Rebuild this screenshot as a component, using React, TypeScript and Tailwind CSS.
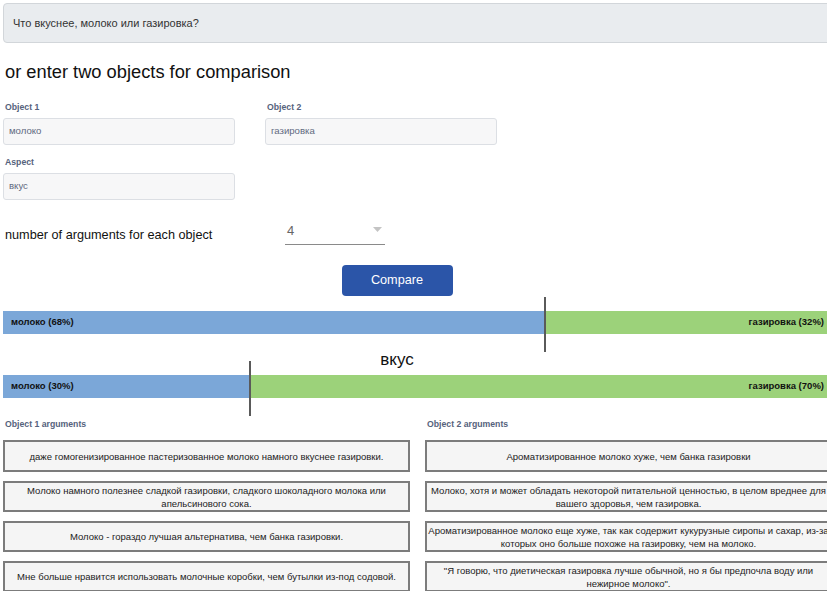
import React from "react";

interface Score {
  first: number;
  second: number;
  split: number; // where the divider sits, px from the bar's left edge
}

const objectA = "молоко";
const objectB = "газировка";

const argsA = [
  "даже гомогенизированное пастеризованное молоко намного вкуснее газировки.",
  "Молоко намного полезнее сладкой газировки, сладкого шоколадного молока или апельсинового сока.",
  "Молоко - гораздо лучшая альтернатива, чем банка газировки.",
  "Мне больше нравится использовать молочные коробки, чем бутылки из-под содовой.",
];

const argsB = [
  "Ароматизированное молоко хуже, чем банка газировки",
  "Молоко, хотя и может обладать некоторой питательной ценностью, в целом вреднее для вашего здоровья, чем газировка.",
  "Ароматизированное молоко еще хуже, так как содержит кукурузные сиропы и сахар, из-за которых оно больше похоже на газировку, чем на молоко.",
  "\"Я говорю, что диетическая газировка лучше обычной, но я бы предпочла воду или нежирное молоко\".",
];

const Field = ({ label, value }: { label: string; value: string }) => (
  <div className="flex flex-col">
    <span className="text-[8.7px] leading-[12px] font-bold text-[#55627c] mb-[5px] pl-[2px]">{label}</span>
    <div className="h-[27px] rounded-[3px] border-[1.5px] border-[#dcdfe4] bg-[#f7f7f8] flex items-center px-[5px] text-[9.6px] text-[#5f6a80]">
      {value}
    </div>
  </div>
);

const ScoreBar = ({ score }: { score: Score }) => (
  <div className="relative h-[23px] flex text-[9.5px] font-bold text-[#111]">
    <div className="bg-[#7ba7d8] flex items-center pl-[8px]" style={{ width: score.split }}>
      {objectA} ({score.first}%)
    </div>
    <div className="flex-1 bg-[#9cd27a] flex items-center justify-end pr-[8px]">
      {objectB} ({score.second}%)
    </div>
    {/* divider marker */}
    <div
      className="absolute top-[-14px] bottom-[-18px] w-[2px] bg-[#5a5a5a]"
      style={{ left: score.split - 1 }}
    />
  </div>
);

const ArgBox = ({ text, first }: { text: string; first?: boolean }) => (
  <div
    className={
      "border-2 border-[#7c7c7c] bg-[#f5f5f5] flex items-center justify-center text-center text-[9.5px] leading-[13px] text-[#222] " +
      (first ? "h-[32px]" : "min-h-[31px]")
    }
  >
    {text}
  </div>
);

const App = () => {
  return (
    <div className="w-[827px] h-[591px] overflow-hidden bg-white [font-family:'Liberation_Sans',Arial,sans-serif]">
      <div className="w-[832px] pl-[3px] pt-[3px]">
        {/* free-text question */}
        <div className="h-[40px] rounded-[4px] border border-[#d2d6da] bg-[#e9ecef] flex items-center px-[9px] text-[11px] text-[#333]">
          Что вкуснее, молоко или газировка?
        </div>

        <h2 className="mt-[17px] pl-[2px] text-[18.3px] leading-[23px] text-[#111]">
          or enter two objects for comparison
        </h2>

        <div className="mt-[18px] grid grid-cols-[232px_232px] gap-x-[30px] gap-y-[11px]">
          <Field label="Object 1" value={objectA} />
          <Field label="Object 2" value={objectB} />
          <Field label="Aspect" value="вкус" />
        </div>

        <div className="mt-[27px] flex items-start">
          <span className="w-[282px] pl-[2px] text-[12.7px] leading-[16px] text-[#111]">
            number of arguments for each object
          </span>
          <div className="w-[100px] h-[18px] border-b border-[#8a8a8a] flex items-start justify-between pl-[2px] pr-[3px] text-[13px] leading-[16px] text-[#666]">
            <span className="-mt-[4px]">4</span>
            <svg width="9" height="5" viewBox="0 0 9 5">
              <path d="M0 0h9L4.5 5z" fill="#c4c4c4" />
            </svg>
          </div>
        </div>

        <div className="w-[788px] flex justify-center mt-[20px]">
          <button className="w-[111px] h-[31px] rounded-[4px] bg-[#2b55a8] text-white text-[12.7px]">
            Compare
          </button>
        </div>

        <div className="mt-[15px]">
          <ScoreBar score={{ first: 68, second: 32, split: 542 }} />
        </div>

        <div className="w-[788px] mt-[15px] text-center text-[17px] leading-[21px] text-[#111]">вкус</div>

        <div className="mt-[5px]">
          <ScoreBar score={{ first: 30, second: 70, split: 247 }} />
        </div>

        <div className="mt-[20px] grid grid-cols-[407px_407px] gap-x-[15px]">
          {[argsA, argsB].map((args, col) => (
            <div key={col} className="flex flex-col">
              <span className="pl-[2px] text-[8.7px] leading-[12px] font-bold text-[#55627c] mb-[10px]">
                Object {col + 1} arguments
              </span>
              <div className="flex flex-col gap-[9px]">
                {args.map((a, i) => (
                  <ArgBox key={i} text={a} first={i === 0} />
                ))}
              </div>
            </div>
          ))}
        </div>
      </div>
    </div>
  );
};

export default App;
